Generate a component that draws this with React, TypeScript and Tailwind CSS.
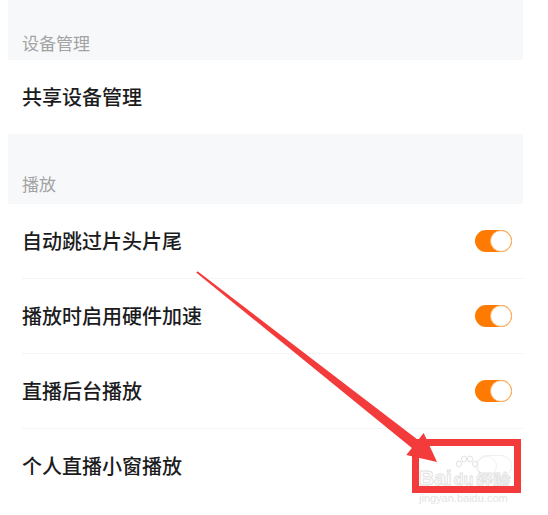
import type { ReactNode } from 'react';

const font = { fontFamily: '"Noto Sans CJK SC", "Noto Sans", sans-serif' };
const latin = { fontFamily: '"Liberation Sans", sans-serif' };

function Toggle({ on }: { on: boolean }) {
  if (!on) {
    return (
      <div className="flex h-[22px] w-[36px] items-center rounded-full border border-[#efefef] bg-white">
        <div className="h-[20px] w-[20px] rounded-full border border-[#f0f0f0] bg-white" />
      </div>
    );
  }
  return (
    <div className="flex h-[22px] w-[37px] items-center justify-end rounded-full bg-[#ff7a00]">
      <div className="h-[22px] w-[22px] rounded-full border border-[#ffb46a] bg-white" />
    </div>
  );
}

function Header({ label, tall }: { label: string; tall?: boolean }) {
  return (
    <div
      className={`flex items-end bg-[#f7f8fa] pl-[14px] text-[17px] text-[#a3a3a3] ${
        tall ? 'h-[70px] pb-[8px]' : 'h-[60px] pb-[5px]'
      }`}
    >
      {label}
    </div>
  );
}

function Row({ label, right, divider = true }: { label: string; right?: ReactNode; divider?: boolean }) {
  return (
    <div className="bg-white">
      <div className="flex h-[74px] items-center justify-between pl-[14px] pr-[11px]">
        <span className="text-[20px] font-medium text-[#1c1c1e]">{label}</span>
        {right}
      </div>
      {divider && <div className="ml-[14px] h-px bg-[#f4f4f4]" />}
    </div>
  );
}

function Watermark() {
  return (
    <div className="absolute left-[419px] top-[467px] flex flex-col items-start">
      <div className="flex items-end leading-none">
        <span className="text-[21px] font-bold leading-none text-white [-webkit-text-stroke:1px_#e2e2e2]" style={latin}>
          Bai
        </span>
        <div className="relative ml-[2px]">
          <svg width="26" height="16" viewBox="0 0 26 16" className="absolute -top-[15px] left-0">
            <g fill="white" stroke="#e0e0e0" strokeWidth="1">
              <ellipse cx="5" cy="9" rx="2.5" ry="3" />
              <ellipse cx="10" cy="4" rx="2.5" ry="3" />
              <ellipse cx="16" cy="4" rx="2.5" ry="3" />
              <ellipse cx="21" cy="9" rx="2.5" ry="3" />
            </g>
          </svg>
          <span className="text-[16px] font-bold leading-none text-white [-webkit-text-stroke:1px_#e2e2e2]" style={latin}>
            du
          </span>
        </div>
        <span className="ml-[3px] text-[17px] font-bold leading-none text-white [-webkit-text-stroke:1px_#e2e2e2]" style={font}>
          经验
        </span>
      </div>
      <span className="mt-[5px] text-[11px] leading-none text-[#e4e4e4]" style={latin}>
        jingyan.baidu.com
      </span>
    </div>
  );
}

export default function App() {
  return (
    <div className="relative h-[515px] w-[548px] overflow-hidden bg-white" style={font}>
      <div className="ml-[8px] w-[515px]">
        <Header label="设备管理" />
        <Row label="共享设备管理" divider={false} />
        <Header label="播放" tall />
        <Row label="自动跳过片头片尾" right={<Toggle on />} />
        <Row label="播放时启用硬件加速" right={<Toggle on />} />
        <Row label="直播后台播放" right={<Toggle on />} />
        <Row label="个人直播小窗播放" right={<Toggle on={false} />} divider={false} />
      </div>

      <Watermark />

      {/* annotation: red arrow + box */}
      <svg className="pointer-events-none absolute left-0 top-0" width="548" height="515">
        <polygon points="196.4,272.8 197.6,271.2 418.1,440.1 411.9,447.9" fill="#f33b3b" />
        <polygon points="423.7,433 437,462 406.3,455" fill="#f33b3b" />
        <rect x="415.5" y="442.5" width="102" height="47" fill="none" stroke="#f33b3b" strokeWidth="7" />
      </svg>
    </div>
  );
}
